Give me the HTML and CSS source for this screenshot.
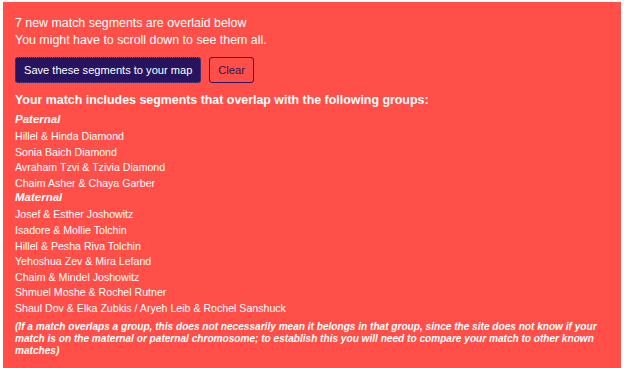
FILE: index.html
```html
<!DOCTYPE html>
<html lang="en">
<head>
    <meta charset="UTF-8">
    <title>Match segments</title>
    <link rel="stylesheet" href="styles.css">
</head>
<body>

<div class="panel">
    <p class="intro">7 new match segments are overlaid below<br>You might have to scroll down to see them all.</p>

    <div class="buttons">
        <button class="btn-save">Save these segments to your map</button>
        <button class="btn-clear">Clear</button>
    </div>

    <h3>Your match includes segments that overlap with the following groups:</h3>

    <h4 class="side">Paternal</h4>
    <ul class="groups">
        <li>Hillel &amp; Hinda Diamond</li>
        <li>Sonia Baich Diamond</li>
        <li>Avraham Tzvi &amp; Tzivia Diamond</li>
        <li>Chaim Asher &amp; Chaya Garber</li>
    </ul>

    <h4 class="side">Maternal</h4>
    <ul class="groups">
        <li>Josef &amp; Esther Joshowitz</li>
        <li>Isadore &amp; Mollie Tolchin</li>
        <li>Hillel &amp; Pesha Riva Tolchin</li>
        <li>Yehoshua Zev &amp; Mira Lefand</li>
        <li>Chaim &amp; Mindel Joshowitz</li>
        <li>Shmuel Moshe &amp; Rochel Rutner</li>
        <li>Shaul Dov &amp; Elka Zubkis / Aryeh Leib &amp; Rochel Sanshuck</li>
    </ul>

    <p class="note">(If a match overlaps a group, this does not necessarily mean it belongs in that group, since the site does not know if your match is on the maternal or paternal chromosome; to establish this you will need to compare your match to other known matches)</p>
</div>

</body>
</html>
```

FILE: styles.css
```css
body{
    margin: 0;
    padding: 2px 3px 0 3px;
    background-color: #fff;
    font-family: "Liberation Sans", Arial, sans-serif;
    color: #fff;
}

.panel{
    background-color: #ff4f48;
    height: 366px;
    box-sizing: border-box;
    padding: 13px 12px 0 12px;
    overflow: hidden;
}

.intro{
    margin: 0;
    font-size: 12.4px;
    line-height: 17px;
}

.buttons{
    display: flex;
    gap: 8px;
    margin-top: 8px;
}

.buttons button{
    font-family: "Liberation Sans", Arial, sans-serif;
    font-size: 11.1px;
    height: 26px;
    border-radius: 3px;
    padding: 0 8px;
}

.btn-save{
    background-color: #27145e;
    color: #fff;
    border: 1px dotted #5a4a8a;
}

.btn-clear{
    background-color: transparent;
    color: #2b1660;
    border: 1px solid #2b1660;
}

h3{
    margin: 9px 0 0 0;
    font-size: 12.4px;
    line-height: 17px;
}

.side{
    margin: 4px 0 0 0;
    font-size: 11.5px;
    font-style: italic;
    line-height: 12px;
}

.groups{
    list-style: none;
    margin: 4px 0 0 0;
    padding: 0;
    font-size: 10.6px;
}

.groups li{
    line-height: 15.6px;
}

.groups + .side{
    margin-top: 0;
}

.note{
    margin: 4px 0 0 0;
    font-size: 10.1px;
    font-weight: bold;
    font-style: italic;
    line-height: 12px;
}
```
